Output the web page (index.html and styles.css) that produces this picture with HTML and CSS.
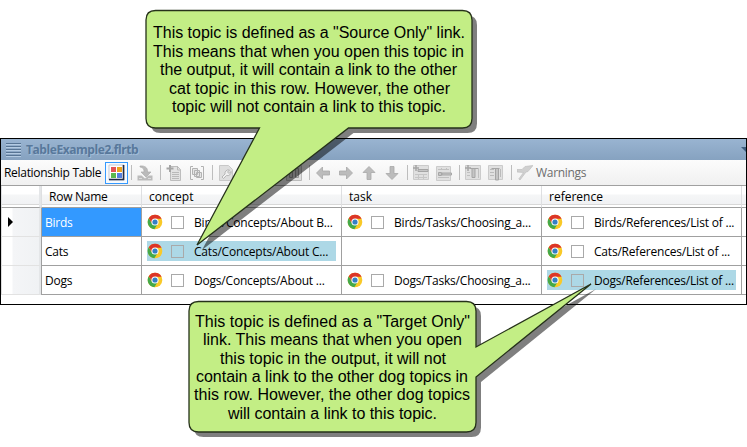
FILE: index.html
```html
<!DOCTYPE html>
<html lang="en">
<head>
<meta charset="utf-8">
<title>TableExample2.flrtb</title>
<link rel="stylesheet" href="styles.css">
</head>
<body>
<svg class="defs" width="0" height="0" aria-hidden="true">
  <defs>
    <symbol id="chrome" viewBox="0 0 16 16">
      <circle cx="8" cy="8" r="7.3" fill="#f9c927"/>
      <path d="M1.7 4.3A7.3 7.3 0 0 0 7.3 15.3L10.8 9.7 8 8 5.2 9.7z" fill="#43a94a"/>
      <path d="M1.8 4.2 5.2 9.6 8 8V4.8h6.5A7.3 7.3 0 0 0 1.8 4.2z" fill="#dc3528"/>
      <circle cx="8" cy="8" r="3.6" fill="#fff"/>
      <circle cx="8" cy="8" r="2.6" fill="#347fc4"/>
    </symbol>
    <symbol id="arrow" viewBox="0 0 16 16">
      <path d="M1.500 8 7.500 2v4h7v4h-7v4z" fill="#bcbcbc" stroke="#a8a8a8" stroke-width=".8"/>
    </symbol>
  </defs>
</svg>

<main class="window">
  <header class="titlebar">
    <span class="grip"><i></i><i></i><i></i><i></i><i></i></span>
    <span class="title">TableExample2.flrtb</span>
    <span class="chevron"></span>
  </header>

  <div class="toolbar">
    <span class="label">Relationship Table</span>
    <span class="toggle"><svg width="17" height="17" viewBox="0 0 17 17"><path d="M1 1h15v15H1z" fill="#fff" stroke="#c3c8d2"/><path d="M1 15.500h14.500V1" fill="none" stroke="#1f2a48" stroke-width="1.600"/><path d="M3 3h5v5H3z" fill="#e45455"/><path d="M9 3h5v5H9z" fill="#eda31b"/><path d="M3 9h5v5H3z" fill="#5cb94d"/><path d="M9 9h5v5H9z" fill="#557fdf"/></svg></span>
    <i class="sep"></i>
    <svg class="icon" viewBox="0 0 16 16"><path d="M3 1c4.500-.5 8 1.500 7.500 6H14l-5 5-5-5h3c.3-3-1-4.500-4-5z" fill="#bababa" stroke="#adadad" stroke-width=".7"/><path d="M.5 10.500h4l3.500 3 3.500-3h4v5H.5z" fill="#bbb"/><path d="M2 13.500h3M11 13.500h3" stroke="#ddd"/></svg>
    <i class="sep"></i>
    <svg class="icon" viewBox="0 0 16 16"><path d="M4.500 1.500h7l3 3v11h-10z" fill="#e3e3e3" stroke="#bdbdbd"/><path d="M6 7.500h7M6 9.500h7M6 11.500h7M6 13.500h7M11.500 1v4h3" fill="none" stroke="#bababa"/><path d="M4 0v7M.5 3.500h7" stroke="#a5a5a5" stroke-width="2"/></svg>
    <svg class="icon" viewBox="0 0 16 16"><path d="M4 1.500H1.500v13H4M12 1.500h2.500v13H12" fill="none" stroke="#b2b2b2"/><path d="M3.500 3.500h5v6h-5zM5.500 5.500h5v6h-5zM7.500 7.500h5v5h-5z" fill="#e5e5e5" stroke="#b2b2b2"/></svg>
    <i class="sep"></i>
    <svg class="icon" viewBox="0 0 16 16"><path d="M1.500.5h9l4 4v11h-13z" fill="#dedede" stroke="#c8c8c8"/><path d="M11.500 5a3.500 3.500 0 0 0-4.500 4l-3 3 1.500 1.500 3-3a3.500 3.500 0 0 0 4.500-4l-2 2L9.500 7z" fill="#f0f0f0" stroke="#aaa" stroke-width=".8"/></svg>
    <span class="covered"></span>
    <svg class="icon" viewBox="0 0 16 16"><path d="M.5.5h15v15H.5z" fill="#ddd" stroke="#bbb"/><path d="M3.500 3.500h3v9h-3zM9.500 3.500h3v9h-3z" fill="#ccc" stroke="#999"/></svg>
    <i class="sep"></i>
    <svg class="icon"><use href="#arrow"/></svg>
    <svg class="icon turn-right"><use href="#arrow"/></svg>
    <svg class="icon turn-up"><use href="#arrow"/></svg>
    <svg class="icon turn-down"><use href="#arrow"/></svg>
    <i class="sep"></i>
    <svg class="icon" viewBox="0 0 16 16"><path d="M.5.500h15v14H.5z" fill="#e0e0e0" stroke="#cbcbcb"/><path d="M2 9.500h12M2 12.500h12M5.500 9v5M10.500 9v5" stroke="#c6c6c6"/><path d="M5 4.500h10v2H5z" fill="#c5c5c5" stroke="#a5a5a5"/><path d="M3 0v6M0 3h6" stroke="#a5a5a5" stroke-width="1.500"/></svg>
    <svg class="icon" viewBox="0 0 16 16"><path d="M.5 1.500h14v14H.5z" fill="#e0e0e0" stroke="#cbcbcb"/><path d="M2 4.500h11M2 12.500h11M5.500 3v2M10.500 3v2" stroke="#c0c0c0"/><path d="M2.500 7.500h3v3h-3zM6 8h9.500v2H6z" fill="#c5c5c5" stroke="#a6a6a6"/></svg>
    <i class="sep"></i>
    <svg class="icon" viewBox="0 0 16 16"><path d="M.5.500h15v14H.5z" fill="#e0e0e0" stroke="#cbcbcb"/><path d="M2 7.500h3M2 10.500h3M13.500 3v10" stroke="#c0c0c0"/><path d="M5 3.500h8M7 4v8.500h3V4" fill="#c5c5c5" stroke="#a5a5a5"/><path d="M3 0v6M0 3h6" stroke="#a5a5a5" stroke-width="1.500"/></svg>
    <svg class="icon" viewBox="0 0 16 16"><path d="M.5.500h14v14H.5z" fill="#e0e0e0" stroke="#cbcbcb"/><path d="M2 4.500h4M2 7.500h4M2 10.500h4M12.500 4v8" stroke="#bbb"/><path d="M3.500 3.500h8M7.500 4v11h3V4" fill="#c5c5c5" stroke="#a5a5a5"/></svg>
    <i class="sep"></i>
    <svg class="icon flag" viewBox="0 0 16 16"><path d="M0 4.500h5L8 1.500l8-1-5 6-2 .5L3 15 1.800 14 6.500 7.500 0 7z" fill="#d0d0d0" stroke="#c0c0c0" stroke-width=".7"/></svg>
    <span class="warnings">Warnings</span>
  </div>

  <section class="grid">
    <div class="row head">
      <div class="marker"></div><div class="name">Row Name</div><div class="col">concept</div><div class="col">task</div><div class="col">reference</div><div class="rest"></div>
    </div>
    <div class="row">
      <div class="marker"><svg width="5" height="10" viewBox="0 0 5 10"><path d="M0 0 5 5 0 10z"/></svg></div>
      <div class="name selected"><span>Birds</span></div>
      <div class="col"><div class="link"><svg class="app"><use href="#chrome"/></svg><i class="box"></i><span>Birds/Concepts/About B...</span></div></div>
      <div class="col"><div class="link"><svg class="app"><use href="#chrome"/></svg><i class="box"></i><span>Birds/Tasks/Choosing_a...</span></div></div>
      <div class="col"><div class="link"><svg class="app"><use href="#chrome"/></svg><i class="box"></i><span>Birds/References/List of ...</span></div></div>
      <div class="rest"></div>
    </div>
    <div class="row">
      <div class="marker"></div>
      <div class="name"><span>Cats</span></div>
      <div class="col"><div class="link tinted"><svg class="app"><use href="#chrome"/></svg><i class="box"></i><span>Cats/Concepts/About C...</span></div></div>
      <div class="col"></div>
      <div class="col"><div class="link"><svg class="app"><use href="#chrome"/></svg><i class="box"></i><span>Cats/References/List of ...</span></div></div>
      <div class="rest"></div>
    </div>
    <div class="row">
      <div class="marker"></div>
      <div class="name"><span>Dogs</span></div>
      <div class="col"><div class="link"><svg class="app"><use href="#chrome"/></svg><i class="box"></i><span>Dogs/Concepts/About ...</span></div></div>
      <div class="col"><div class="link"><svg class="app"><use href="#chrome"/></svg><i class="box"></i><span>Dogs/Tasks/Choosing_a...</span></div></div>
      <div class="col"><div class="link tinted"><svg class="app"><use href="#chrome"/></svg><i class="box"></i><span>Dogs/References/List of ...</span></div></div>
      <div class="rest"></div>
    </div>
  </section>
</main>

<svg class="callouts" width="747" height="447" viewBox="0 0 747 447">
  <defs>
    <path id="source" d="M155.500 10.500H462.500Q472 10.500 472 20V118.500Q472 128 462.500 128H348.500L197 245 259.500 128H155.500Q146 128 146 118.500V20Q146 10.500 155.500 10.500z"/>
    <path id="target" d="M198.500 301.500H466.500Q476 301.500 476 311V347L591 284 476 377V422.500Q476 432 466.500 432H198.500Q189 432 189 422.500V311Q189 301.500 198.500 301.500z"/>
  </defs>
  <use href="#source" class="shadow" x="5" y="5"/>
  <use href="#source" class="bubble"/>
  <use href="#target" class="shadow" x="5" y="5"/>
  <use href="#target" class="bubble"/>
  <g class="note">
    <text x="153" y="38" textLength="312">This topic is defined as a "Source Only" link.</text>
    <text x="153" y="57" textLength="311">This means that when you open this topic in</text>
    <text x="160" y="75" textLength="297">the output, it will contain a link to the other</text>
    <text x="169" y="94" textLength="281">cat topic in this row. However, the other</text>
    <text x="172" y="112" textLength="274">topic will not contain a link to this topic.</text>
    <text x="195" y="327" textLength="275">This topic is defined as a "Target Only"</text>
    <text x="203" y="345" textLength="259">link. This means that when you open</text>
    <text x="220" y="364" textLength="226">this topic in the output, it will not</text>
    <text x="196" y="382" textLength="272">contain a link to the other dog topics in</text>
    <text x="194" y="400" textLength="276">this row. However, the other dog topics</text>
    <text x="228" y="419" textLength="209">will contain a link to this topic.</text>
  </g>
</svg>
</body>
</html>
```

FILE: styles.css
```css
* { box-sizing: border-box; }
body {
  margin: 0;
  width: 747px;
  height: 447px;
  overflow: hidden;
  position: relative;
  padding-top: 138px;
  background: #fff;
  color: #000;
  font: 12px/16px "Open Sans", "Noto Sans", sans-serif;
}
.defs { position: absolute; }
.window {
  width: 747px;
  height: 167px;
  border: 1px solid #000;
  background: #fff;
  overflow: hidden;
}
.titlebar {
  height: 21px;
  display: flex;
  align-items: center;
  padding-left: 5px;
  background: linear-gradient(#99b4d1, #86a2c0);
}
.grip { width: 15px; display: flex; flex-direction: column; gap: 1px; }
.grip i { height: 2px; background: #587594; border-bottom: 1px solid #b4cbe2; }
.title {
  margin-left: 5px;
  font-weight: 700;
  font-size: 12px;
  letter-spacing: -0.43px;
  color: #58789b;
  text-shadow: 1px 1px 0 #a2bcd7;
}
.chevron {
  margin-left: auto;
  margin-right: -5px;
  border: 5px solid transparent;
  border-top-color: #3f5d7e;
  border-bottom: 0;
}
.toolbar {
  height: 25px;
  display: flex;
  align-items: center;
  background: linear-gradient(#fcfcfc, #f0f0f0);
}
.label { width: 104px; flex: none; padding-left: 3px; white-space: nowrap; letter-spacing: -0.3px; }
.toggle {
  width: 23px;
  height: 22px;
  margin-right: 3px;
  flex: none;
  display: flex;
  align-items: center;
  justify-content: center;
  border: 1px solid #3399ff;
  background: #f7fafd;
}
.sep { width: 1px; height: 15px; margin-right: 5px; background: #bdbdbd; }
.icon { width: 16px; height: 16px; margin-right: 7px; flex: none; }
.covered { width: 45px; }
.turn-right { transform: rotate(180deg); }
.turn-up { transform: rotate(90deg); }
.turn-down { transform: rotate(-90deg); }
.flag { margin-right: 3px; }
.warnings { color: #6d6d6d; letter-spacing: -0.3px; }

.grid { border-top: 1px solid #a0a0a0; }
.row {
  height: 29px;
  display: grid;
  grid-template-columns: 40px 100px 200px 200px 200px 1fr;
}
.row > div {
  display: flex;
  align-items: center;
  border-bottom: 1px solid #a0a0a0;
  border-left: 1px solid #a0a0a0;
}
.row > .marker {
  padding-left: 6px;
  border-left: 1px solid #dcdcdc;
  border-bottom-color: #e2e2e2;
  border-right: 2px solid #e4e6e8;
  background: linear-gradient(90deg, #fff 10px, #f4f5f7 11px, #f0f2f4);
}
.row > .name { padding-left: 3px; letter-spacing: -0.25px; }
.name span, .link span { padding-top: 1px; }
.row > .selected { background: #3399ff; color: #fff; }
.head { height: 22px; }
.row.head > div {
  border-left-color: #dedfe1;
  border-bottom: 1px solid #a0a0a0;
  background: linear-gradient(#fff 8px, #f5f6f7 9px, #f1f2f4 18px, #d8d8d8 18px, #d8d8d8 19px, #fff 19px);
}
.row.head > .name, .row.head > .col { padding-left: 7px; }
.link {
  width: 189px;
  height: 20px;
  margin-left: 5px;
  display: flex;
  align-items: center;
  white-space: nowrap;
}
.tinted { background: #add8e6; }
.app { width: 16px; height: 16px; flex: none; }
.box { width: 13px; height: 13px; margin: 0 10px 0 8px; flex: none; border: 1px solid #a9a9a9; }
.link span { letter-spacing: -0.2px; }

.callouts { position: absolute; left: 0; top: 0; }
.shadow { fill: #000; fill-opacity: .5; }
.bubble { fill: #c3ee85; stroke: #26321a; stroke-width: 1.3; }
.note { font: 16px "Liberation Sans", Arial, sans-serif; fill: #000; }
```
